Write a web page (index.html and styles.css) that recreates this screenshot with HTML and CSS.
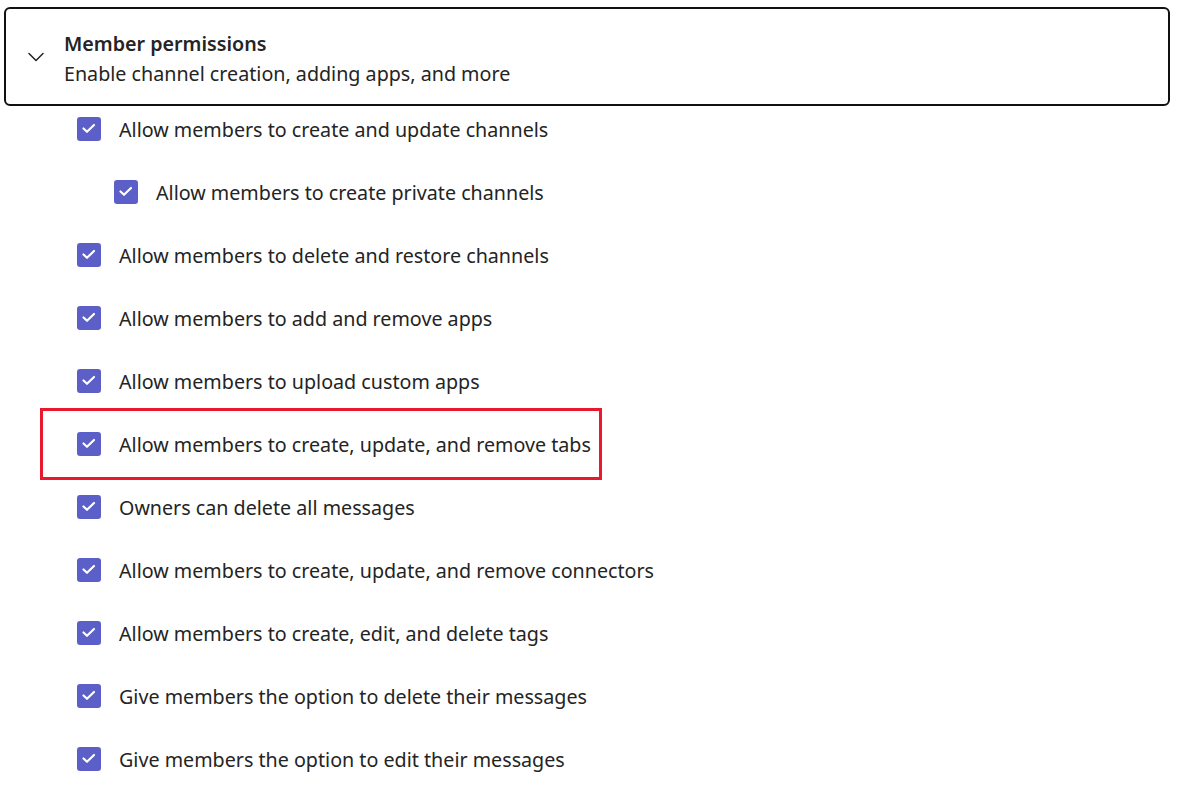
FILE: index.html
```html
<!DOCTYPE html>
<html lang="en">
<head>
  <meta charset="UTF-8">
  <title>Member permissions</title>
  <link rel="stylesheet" href="styles.css">
</head>
<body>

<div class="panel">
  <div class="panel-header">
    <svg class="chevron" width="16" height="10" viewBox="0 0 16 10">
      <path d="M1 1.5 L8 8.5 L15 1.5" fill="none" stroke="#242424" stroke-width="1.5" stroke-linecap="round" stroke-linejoin="round"/>
    </svg>
    <div class="panel-text">
      <div class="panel-title">Member permissions</div>
      <div class="panel-sub">Enable channel creation, adding apps, and more</div>
    </div>
  </div>
</div>

<div class="options">
  <div class="option"><svg class="box" viewBox="0 0 24 24"><rect width="24" height="24" rx="3"/><path d="M6.5 11.5 L10 14.8 L17 8"/></svg>Allow members to create and update channels</div>
  <div class="option sub"><svg class="box" viewBox="0 0 24 24"><rect width="24" height="24" rx="3"/><path d="M6.5 11.5 L10 14.8 L17 8"/></svg>Allow members to create private channels</div>
  <div class="option"><svg class="box" viewBox="0 0 24 24"><rect width="24" height="24" rx="3"/><path d="M6.5 11.5 L10 14.8 L17 8"/></svg>Allow members to delete and restore channels</div>
  <div class="option"><svg class="box" viewBox="0 0 24 24"><rect width="24" height="24" rx="3"/><path d="M6.5 11.5 L10 14.8 L17 8"/></svg>Allow members to add and remove apps</div>
  <div class="option"><svg class="box" viewBox="0 0 24 24"><rect width="24" height="24" rx="3"/><path d="M6.5 11.5 L10 14.8 L17 8"/></svg>Allow members to upload custom apps</div>
  <div class="option highlight"><svg class="box" viewBox="0 0 24 24"><rect width="24" height="24" rx="3"/><path d="M6.5 11.5 L10 14.8 L17 8"/></svg>Allow members to create, update, and remove tabs</div>
  <div class="option"><svg class="box" viewBox="0 0 24 24"><rect width="24" height="24" rx="3"/><path d="M6.5 11.5 L10 14.8 L17 8"/></svg>Owners can delete all messages</div>
  <div class="option"><svg class="box" viewBox="0 0 24 24"><rect width="24" height="24" rx="3"/><path d="M6.5 11.5 L10 14.8 L17 8"/></svg>Allow members to create, update, and remove connectors</div>
  <div class="option"><svg class="box" viewBox="0 0 24 24"><rect width="24" height="24" rx="3"/><path d="M6.5 11.5 L10 14.8 L17 8"/></svg>Allow members to create, edit, and delete tags</div>
  <div class="option"><svg class="box" viewBox="0 0 24 24"><rect width="24" height="24" rx="3"/><path d="M6.5 11.5 L10 14.8 L17 8"/></svg>Give members the option to delete their messages</div>
  <div class="option"><svg class="box" viewBox="0 0 24 24"><rect width="24" height="24" rx="3"/><path d="M6.5 11.5 L10 14.8 L17 8"/></svg>Give members the option to edit their messages</div>
</div>

</body>
</html>
```

FILE: styles.css
```css
body {
  margin: 0;
  background: #ffffff;
  color: #242424;
  font-family: 'Noto Sans', 'Open Sans', sans-serif;
  font-size: 19.7px;
}

.panel {
  margin: 7px 14px 0 4px;
  border: 2px solid #111111;
  border-radius: 6px;
  height: 99px;
  box-sizing: border-box;
  display: flex;
  align-items: center;
}

.panel-header {
  display: flex;
  align-items: center;
  padding-left: 22px;
}

.chevron {
  margin-right: 20px;
  margin-top: 0;
}

.panel-text {
  padding-top: 4px;
}

.panel-title {
  font-weight: 600;
  line-height: 30px;
}

.panel-sub {
  line-height: 30px;
}

.options {
  margin-top: 9px;
  padding-left: 77px;
  display: flex;
  flex-direction: column;
  gap: 35px;
}

.option {
  display: flex;
  align-items: center;
  height: 28px;
  width: max-content;
  position: relative;
}

.option.sub {
  margin-left: 37px;
}

.box {
  width: 24px;
  height: 24px;
  margin-right: 18px;
  flex-shrink: 0;
}

.box rect {
  fill: #5b5fc7;
}

.box path {
  fill: none;
  stroke: #ffffff;
  stroke-width: 2.2;
  stroke-linecap: round;
  stroke-linejoin: round;
}

.highlight::before {
  content: "";
  position: absolute;
  left: -37px;
  right: -11px;
  top: -22px;
  bottom: -22px;
  border: 3px solid #e8192c;
}
```
